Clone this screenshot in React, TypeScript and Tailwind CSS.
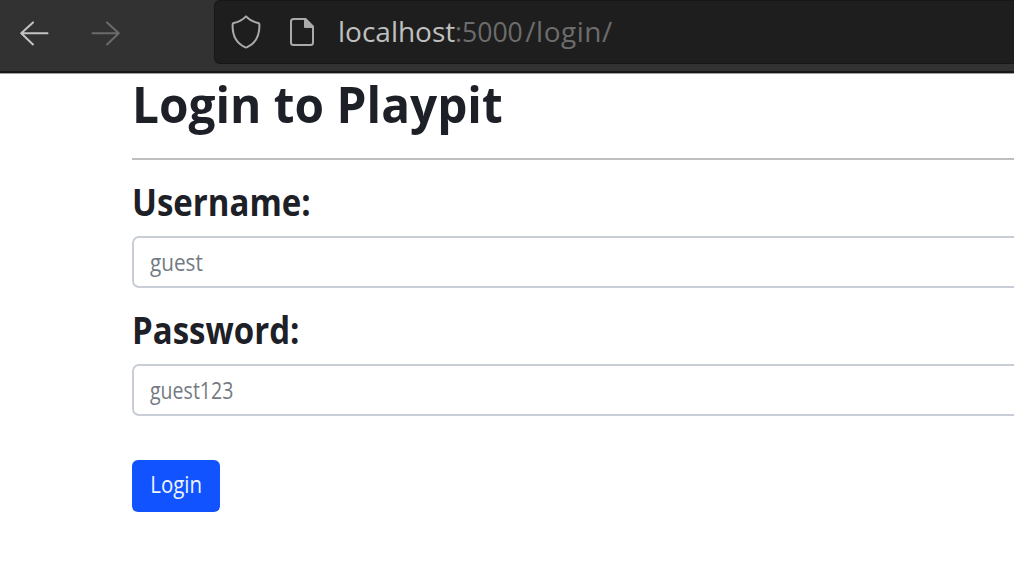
function Arrow({ forward = false }: { forward?: boolean }) {
  return (
    <svg
      width="30"
      height="26"
      viewBox="0 0 30 26"
      fill="none"
      stroke={forward ? "#6b6b6b" : "#c4c4c4"}
      strokeWidth="2"
      strokeLinecap="round"
      strokeLinejoin="round"
      className={forward ? "-scale-x-100" : ""}
    >
      <path d="M14 2.4 2.2 13.3 14 24.4M2.2 13.3H28.5" />
    </svg>
  );
}

function Toolbar() {
  return (
    <header className="flex h-[74px] items-start border-b border-[#a0a0a0] bg-[#323232] shadow-[inset_0_-2px_0_#171717]">
      <nav className="flex w-[214px] gap-[42px] pt-5 pl-[19px]">
        <button aria-label="Back">
          <Arrow />
        </button>
        <button aria-label="Forward">
          <Arrow forward />
        </button>
      </nav>
      <div className="flex h-[64px] flex-1 items-center rounded-l-[6px] border border-r-0 border-[#171717] bg-[#1e1e1e] pl-4">
        <svg width="30" height="34" viewBox="0 0 30 34" fill="none" stroke="#aaa" strokeWidth="2" strokeLinejoin="round">
          <path d="M15 1.4C12 4.6 7 7.2 2.6 8Q1.6 8.4 1.6 9.6C1.3 20 5.5 28.3 13.8 32.1Q15 32.8 16.2 32.1C24.5 28.3 28.7 20 28.4 9.6Q28.4 8.4 27.4 8C23 7.2 18 4.6 15 1.4Z" />
        </svg>
        <svg className="ml-[28px]" width="26" height="30" viewBox="0 0 26 30" fill="none" stroke="#aaa" strokeWidth="2" strokeLinejoin="round">
          <path d="M4.5 2H16.5L24 9.5V25.5Q24 28 21.5 28H4.5Q2 28 2 25.5V4.5Q2 2 4.5 2Z" />
          <path d="M16 2V10H24Z" fill="#aaa" />
        </svg>
        <span className="mb-[2px] ml-[23px] flex text-[28px] leading-[38px] whitespace-nowrap text-[#6c6c6c]">
          <span className="text-[#c0c0c0]">localhost</span>
          <span className="w-[67px] origin-left scale-x-[0.95]">:5000</span>
          <span className="ml-[3px] tracking-[0.5px]">/login/</span>
        </span>
      </div>
    </header>
  );
}

type FieldProps = { label: string; hint: string; labelScale: string; hintScale: string };

function Field({ label, hint, labelScale, hintScale }: FieldProps) {
  return (
    <label className="block h-[128px]">
      <span className={`block h-[57px] w-max origin-left text-[37px] leading-[45px] font-bold ${labelScale}`}>{label}</span>
      <span className="flex h-[52px] w-[900px] rounded-[7px] border-2 border-[#c9ced6] bg-white pl-4">
        <input
          placeholder={hint}
          className={`w-full origin-left bg-transparent text-[23px] outline-none placeholder:text-[#737a82] ${hintScale}`}
        />
      </span>
    </label>
  );
}

export default function App() {
  return (
    <div className="h-[584px] w-[1014px] overflow-hidden bg-white font-['Open_Sans',sans-serif] text-[#1d2026]">
      <Toolbar />
      <main className="pl-[132px]">
        <h1 className="h-[84px] w-max origin-left scale-x-[0.955] text-[50px] leading-[60px] font-bold">Login to Playpit</h1>
        <hr className="border-t-2 border-[#bebfc0]" />
        <form className="pt-[19px]">
          <Field label="Username:" hint="guest" labelScale="scale-x-[0.892]" hintScale="scale-x-[0.9]" />
          <Field label="Password:" hint="guest123" labelScale="scale-x-[0.892]" hintScale="scale-x-[0.85]" />
          <button type="button" className="mt-[25px] h-[52px] w-[88px] rounded-[6px] bg-[#1053ff] pb-1 text-[23px] text-[#eef3ff]">
            <span className="inline-block scale-x-[0.89]">Login</span>
          </button>
        </form>
      </main>
    </div>
  );
}
